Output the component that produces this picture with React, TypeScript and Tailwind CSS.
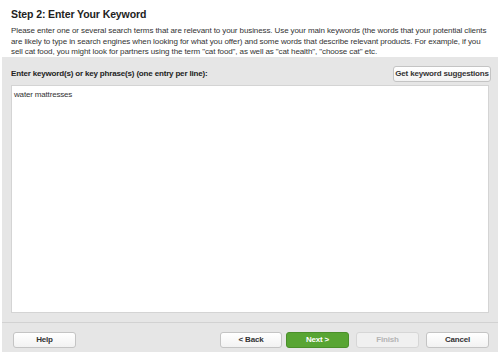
import React from "react";

const Button = ({
  label,
  variant = "default",
  className = "",
}: {
  label: string;
  variant?: "default" | "primary" | "disabled";
  className?: string;
}) => {
  const styles =
    variant === "primary"
      ? "bg-[#58a533] border-[#4a8f2a] text-white"
      : variant === "disabled"
      ? "bg-[#f0f0f0] border-[#d6d6d6] text-[#b4b4b4]"
      : "bg-gradient-to-b from-white to-[#f2f2f2] border-[#c4c4c4] text-[#333]";
  return (
    <button
      className={`h-[16px] rounded-[3px] border text-[8px] font-bold leading-none tracking-[-0.17px] whitespace-nowrap ${styles} ${className}`}
    >
      {label}
    </button>
  );
};

export default function App() {
  return (
    <div
      className="w-[500px] h-[357px] bg-white text-[#333] overflow-hidden"
      style={{ fontFamily: '"Liberation Sans", Arial, sans-serif' }}
    >
      {/* Header */}
      <div className="h-[57px] px-[11px] pt-[8px]">
        <h1 className="text-[10.5px] font-bold text-[#222] leading-[13px] tracking-[-0.1px]">
          Step 2: Enter Your Keyword
        </h1>
        <p className="mt-[5px] text-[8px] leading-[10.5px] tracking-[-0.1px] text-[#333]">
          Please enter one or several search terms that are relevant to your
          business. Use your main keywords (the words that your potential
          clients are likely to type in search engines when looking for what
          you offer) and some words that describe relevant products. For
          example, if you sell cat food, you might look for partners using the
          term "cat food", as well as "cat health", "choose cat" etc.
        </p>
      </div>

      {/* Main panel */}
      <div className="mx-[2px] h-[295px] bg-[#e6e6e6] flex flex-col">
        <div className="flex items-center justify-between pl-[9px] pr-[7px] pt-[9px]">
          <span className="text-[8px] font-bold text-[#222] tracking-[-0.17px]">
            Enter keyword(s) or key phrase(s) (one entry per line):
          </span>
          <Button label="Get keyword suggestions" className="w-[98px]" />
        </div>
        <div className="mx-[9px] mt-[3px] h-[228px] bg-white border border-[#d4d4d4] px-[2px] pt-[3px] text-[8px] tracking-[-0.17px] text-[#333]">
          water mattresses
        </div>
        <div className="mt-[9px] border-t border-[#d2d2d2] flex items-center pl-[11px] pr-[9px] pt-[9px]">
          <Button label="Help" className="w-[63px]" />
          <div className="ml-auto flex">
            <Button label="< Back" className="w-[62px]" />
            <Button label="Next >" variant="primary" className="w-[63px] ml-[4px]" />
            <Button label="Finish" variant="disabled" className="w-[63px] ml-[7px]" />
            <Button label="Cancel" className="w-[63px] ml-[7px]" />
          </div>
        </div>
      </div>
    </div>
  );
}
